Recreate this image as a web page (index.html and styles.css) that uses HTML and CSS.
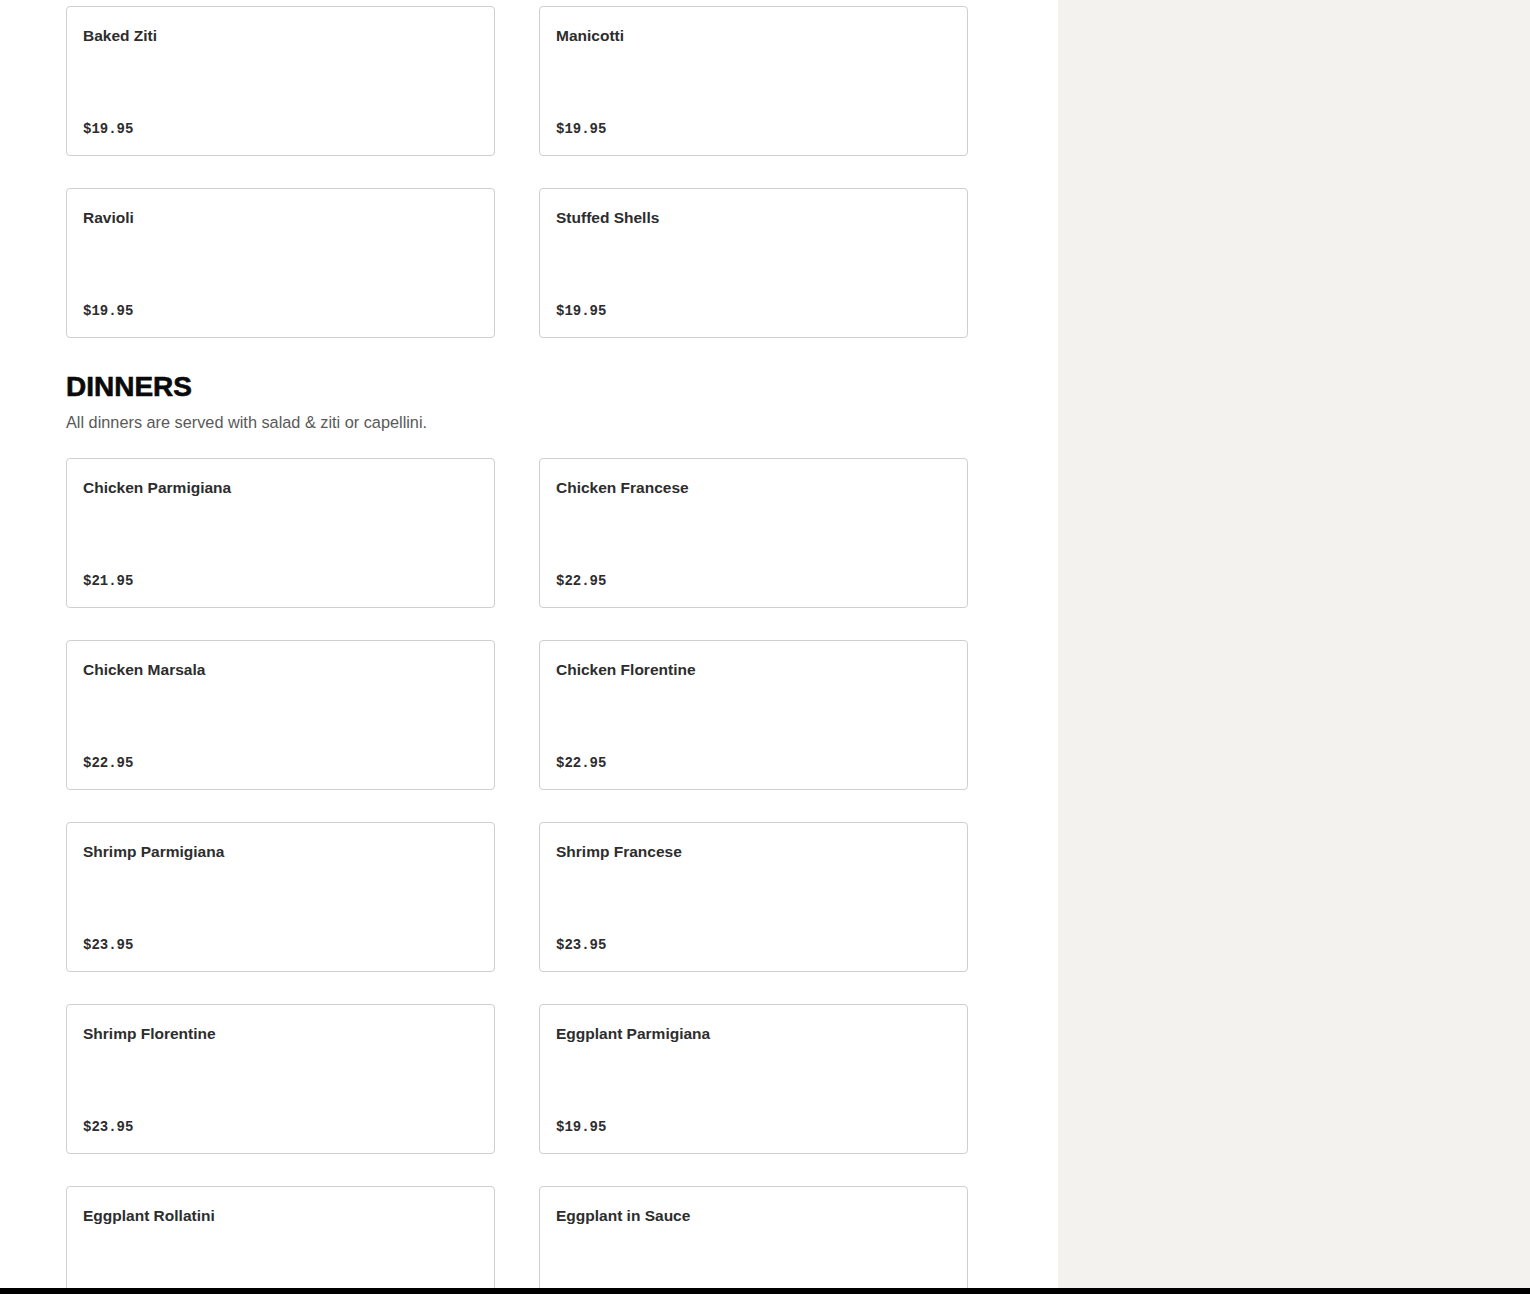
FILE: index.html
```html
<!DOCTYPE html>
<html lang="en">
<head>
<meta charset="utf-8">
<title>Menu</title>
<link rel="stylesheet" href="styles.css">
</head>
<body>
<div class="page">
  <main class="menu">
    <div class="grid">
      <div class="card"><div class="name">Baked Ziti</div><div class="price">$19.95</div></div>
      <div class="card"><div class="name">Manicotti</div><div class="price">$19.95</div></div>
      <div class="card"><div class="name">Ravioli</div><div class="price">$19.95</div></div>
      <div class="card"><div class="name">Stuffed Shells</div><div class="price">$19.95</div></div>
    </div>
    <section class="section">
      <h2 class="heading">DINNERS</h2>
      <p class="desc">All dinners are served with salad &amp; ziti or capellini.</p>
      <div class="grid">
        <div class="card"><div class="name">Chicken Parmigiana</div><div class="price">$21.95</div></div>
        <div class="card"><div class="name">Chicken Francese</div><div class="price">$22.95</div></div>
        <div class="card"><div class="name">Chicken Marsala</div><div class="price">$22.95</div></div>
        <div class="card"><div class="name">Chicken Florentine</div><div class="price">$22.95</div></div>
        <div class="card"><div class="name">Shrimp Parmigiana</div><div class="price">$23.95</div></div>
        <div class="card"><div class="name">Shrimp Francese</div><div class="price">$23.95</div></div>
        <div class="card"><div class="name">Shrimp Florentine</div><div class="price">$23.95</div></div>
        <div class="card"><div class="name">Eggplant Parmigiana</div><div class="price">$19.95</div></div>
        <div class="card"><div class="name">Eggplant Rollatini</div><div class="price">$19.95</div></div>
        <div class="card"><div class="name">Eggplant in Sauce</div><div class="price">$19.95</div></div>
      </div>
    </section>
  </main>
  <aside class="sidebar"></aside>
</div>
<div class="bottom-bar"></div>
</body>
</html>
```
FILE: styles.css
```css
html, body {
  margin: 0;
  padding: 0;
  height: 1294px;
  overflow: hidden;
  background: #ffffff;
}
body {
  font-family: "Liberation Sans", Arial, sans-serif;
  color: #2d2d2d;
}
.page {
  display: flex;
  min-height: 1294px;
}
.menu {
  width: 1058px;
  box-sizing: border-box;
  padding: 6px 0 0 66px;
  background: #ffffff;
}
.sidebar {
  flex: 1;
  background: #f3f2ef;
}
.grid {
  display: grid;
  grid-template-columns: 429px 429px;
  column-gap: 44px;
  row-gap: 32px;
}
.card {
  box-sizing: border-box;
  height: 150px;
  border: 1px solid #cfcfcf;
  border-radius: 4px;
  padding: 18px 16px 16px 16px;
  display: flex;
  flex-direction: column;
  justify-content: space-between;
  background: #fff;
}
.name {
  font-size: 15.5px;
  line-height: 22px;
  font-weight: 700;
  color: #2d2d2d;
}
.price {
  font-family: "Liberation Mono", "DejaVu Sans Mono", monospace;
  font-size: 14px;
  line-height: 20px;
  font-weight: 700;
  color: #2d2d2d;
}
.section {
  margin-top: 32px;
}
.heading {
  margin: 0;
  font-family: "Liberation Sans", Arial, sans-serif;
  font-size: 28px;
  line-height: 34px;
  font-weight: 700;
  color: #0a0a0a;
  -webkit-text-stroke: 0.6px #0a0a0a;
}
.desc {
  margin: 6px 0 24px 0;
  font-size: 16.3px;
  line-height: 24px;
  color: #595959;
}
.bottom-bar {
  position: fixed;
  left: 0;
  right: 0;
  bottom: 0;
  height: 6px;
  background: #000;
}
```
